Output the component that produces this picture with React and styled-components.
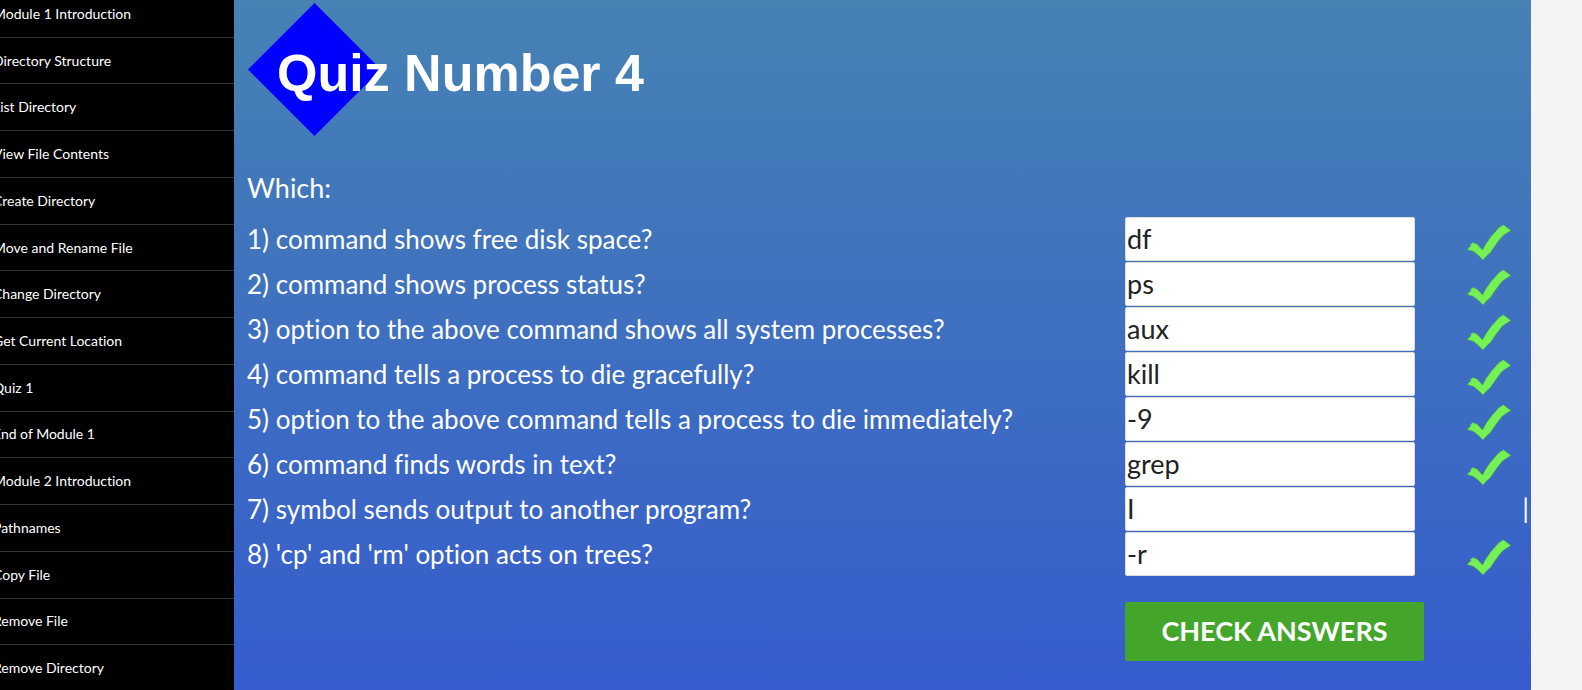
import React from 'react';
import styled, { createGlobalStyle } from 'styled-components';

const Global = createGlobalStyle`
  * { box-sizing: border-box; }
  body {
    margin: 0;
    background: #f4f4f4;
    font-family: Lato, "Liberation Sans", sans-serif;
    font-variant-ligatures: no-common-ligatures;
  }
`;

const Page = styled.div`
  display: flex;
  height: 100vh;
  overflow: hidden;
`;

const Sidebar = styled.nav`
  flex: 0 0 234px;
  background: #000;
  overflow: hidden;
`;

const NavList = styled.ul`
  display: flex;
  flex-direction: column;
  height: calc(100% + 11px);
  margin: -9px 0 0;
  padding: 0;
  list-style: none;
`;

const NavItem = styled.li`
  display: flex;
  flex: 1;
  align-items: center;
  border-bottom: 1px solid #333;
`;

const NavLink = styled.a`
  margin-left: -7px;
  color: #fff;
  font-size: 14px;
  line-height: 20px;
  text-decoration: none;
  white-space: nowrap;
`;

const Main = styled.main`
  flex: 1;
  margin-right: 51px;
  padding: 3px 0 0 13px;
  background: linear-gradient(#4682b4, #365ccd);
  color: #fff;
`;

const Banner = styled.header`
  display: flex;
  align-items: center;
  margin-bottom: 29px;
  padding-left: 1px;
`;

const Diamond = styled.svg`
  flex: none;
  width: 133px;
  height: 133px;
`;

const Title = styled.h1`
  margin: 6px 0 0 -104px;
  position: relative;
  font: bold 52px/60px "Liberation Sans", Arial, sans-serif;
`;

const Lead = styled.p`
  margin: 0 0 7px;
  font-size: 27px;
  line-height: 45px;
`;

const Row = styled.div`
  display: grid;
  grid-template-columns: minmax(0, 1fr) 290px 116px;
  align-items: start;
  height: 45px;
`;

const Question = styled.label`
  font-size: 26px;
  line-height: 44px;
`;

const Answer = styled.input`
  width: 100%;
  height: 44px;
  padding: 0 1px 1px;
  border: 1px solid #ddd;
  border-radius: 2px;
  background: #fff;
  color: #222;
  font: 27px Lato, "Liberation Sans", sans-serif;
`;

const Mark = styled.span`
  display: flex;
  justify-content: flex-end;
  padding-right: ${(p) => (p.$correct ? '19px' : '2px')};
  font-size: 27px;
  line-height: 42px;
`;

const Tick = styled.svg`
  width: 46px;
  height: 37px;
  margin-top: 7px;
`;

const Actions = styled.div`
  display: flex;
  justify-content: flex-end;
  padding: 25px 107px 0 0;
`;

const CheckButton = styled.button`
  width: 299px;
  height: 59px;
  padding: 0 0 2px;
  border: 0;
  border-radius: 2px;
  background: #43a62b;
  color: #fff;
  font: bold 27px Lato, "Liberation Sans", sans-serif;
`;

const pages = [
  'Module 1 Introduction', 'Directory Structure', 'List Directory', 'View File Contents',
  'Create Directory', 'Move and Rename File', 'Change Directory', 'Get Current Location',
  'Quiz 1', 'End of Module 1', 'Module 2 Introduction', 'Pathnames', 'Copy File',
  'Remove File', 'Remove Directory',
];

const questions = [
  ['command shows free disk space?', 'df', true],
  ['command shows process status?', 'ps', true],
  ['option to the above command shows all system processes?', 'aux', true],
  ['command tells a process to die gracefully?', 'kill', true],
  ['option to the above command tells a process to die immediately?', '-9', true],
  ['command finds words in text?', 'grep', true],
  ['symbol sends output to another program?', 'I', false],
  ["'cp' and 'rm' option acts on trees?", '-r', true],
];

export default function App() {
  return (
    <Page>
      <Global />
      <Sidebar aria-label="Course">
        <NavList>
          {pages.map((name) => (
            <NavItem key={name}><NavLink href="#">{name}</NavLink></NavItem>
          ))}
        </NavList>
      </Sidebar>
      <Main>
        <Banner>
          <Diamond viewBox="0 0 133 133" aria-hidden="true">
            <path d="M66.5 0 133 66.5 66.5 133 0 66.5Z" fill="#00f" />
          </Diamond>
          <Title>Quiz Number 4</Title>
        </Banner>
        <form onSubmit={(e) => e.preventDefault()}>
          <Lead>Which:</Lead>
          {questions.map(([text, value, correct], i) => (
            <Row key={text}>
              <Question htmlFor={`q${i}`}>{i + 1}) {text}</Question>
              <Answer id={`q${i}`} defaultValue={value} autoComplete="off" spellCheck={false} />
              <Mark $correct={correct}>
                {correct ? (
                  <Tick viewBox="0 0 46 37" role="img" aria-label="Correct">
                    <path
                      d="M1 25.500 5 21.500 4 20.500 7 18.500 11 20 16.500 26 20 19.500 25 12.500 29.500 7.500 33 3.500 37.500 0.700 41 3.500 45 6.500 41 9 36.500 12 32.500 17 28.500 22.500 24.500 28.500 21 31.500 17 36 12.500 31.500 7.500 27.500Z"
                      fill="#75f055"
                      stroke="#4a9c55"
                      strokeWidth="0.600"
                    />
                  </Tick>
                ) : '|'}
              </Mark>
            </Row>
          ))}
          <Actions><CheckButton type="submit">CHECK ANSWERS</CheckButton></Actions>
        </form>
      </Main>
    </Page>
  );
}
